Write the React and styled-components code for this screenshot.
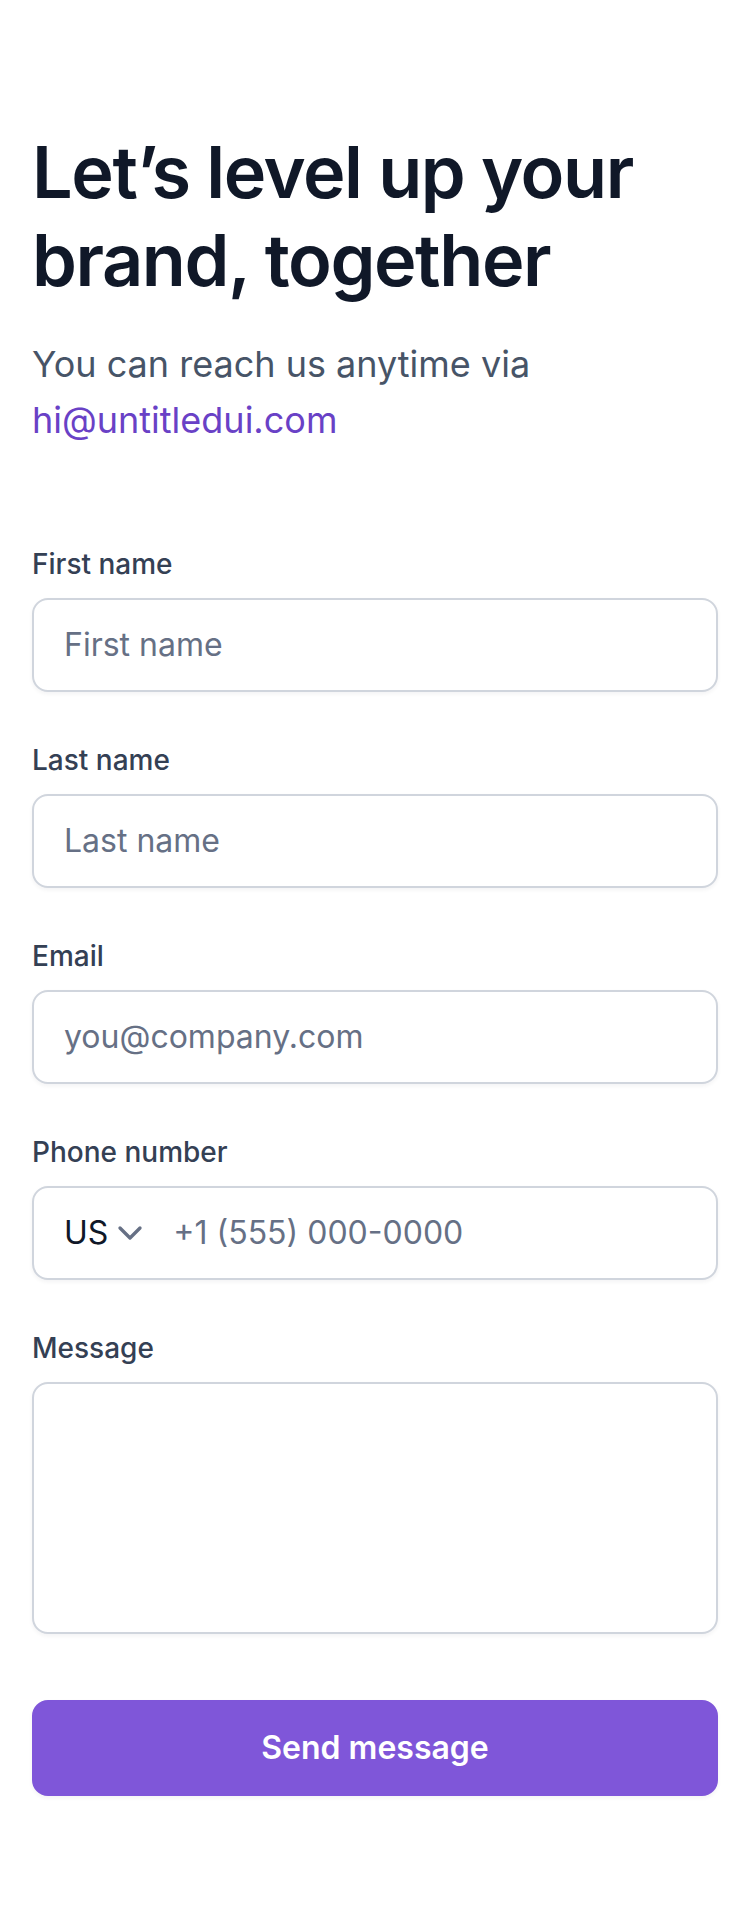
import React from 'react';
import styled, { createGlobalStyle } from 'styled-components';

const GlobalStyle = createGlobalStyle`
  * { box-sizing: border-box; }
  html, body {
    margin: 0;
    padding: 0;
    background: #ffffff;
    font-family: Inter, "Noto Sans", sans-serif;
    -webkit-font-smoothing: antialiased;
  }
`;

const Page = styled.main`
  padding: 128px 32px 128px;
  display: flex;
  flex-direction: column;
`;

const Header = styled.header`
  display: flex;
  flex-direction: column;
  gap: 32px;
  margin-bottom: 96px;
`;

const Title = styled.h1`
  margin: 0;
  font-size: 72px;
  line-height: 88px;
  font-weight: 600;
  letter-spacing: -1.44px;
  color: #101828;
`;

const Lead = styled.p`
  margin: 0;
  font-size: 36px;
  line-height: 56px;
  font-weight: 400;
  color: #475467;
`;

const MailLink = styled.a`
  color: #6941c6;
  text-decoration: none;
`;

const Form = styled.form`
  display: flex;
  flex-direction: column;
  gap: 48px;
`;

const Field = styled.div`
  display: flex;
  flex-direction: column;
  gap: 14px;
`;

const Label = styled.label`
  font-size: 28px;
  line-height: 40px;
  font-weight: 500;
  color: #344054;
`;

const Box = styled.div`
  display: flex;
  align-items: center;
  height: ${(p) => p.$height || 94}px;
  padding: 0 30px;
  border: 2px solid #d0d5dd;
  border-radius: 16px;
  background: #fff;
  box-shadow: 0 2px 4px rgba(16, 24, 40, 0.05);
`;

const TextInput = styled.input`
  flex: 1;
  min-width: 0;
  border: 0;
  outline: none;
  background: transparent;
  padding: 0;
  font-family: inherit;
  font-size: 32px;
  line-height: 48px;
  color: #101828;

  &::placeholder {
    color: #667085;
  }
`;

const TextArea = styled.textarea`
  display: block;
  width: 100%;
  height: 252px;
  padding: 20px 30px;
  border: 2px solid #d0d5dd;
  border-radius: 16px;
  background: #fff;
  box-shadow: 0 2px 4px rgba(16, 24, 40, 0.05);
  font-family: inherit;
  font-size: 32px;
  line-height: 48px;
  color: #101828;
  resize: none;
  outline: none;
`;

const Country = styled.div`
  display: flex;
  align-items: center;
  gap: 2px;
  margin-right: 23px;
  font-size: 32px;
  line-height: 48px;
  color: #101828;
`;

const Chevron = () => (
  <svg width="40" height="40" viewBox="0 0 20 20" fill="none">
    <path
      d="M5 7.5l5 5 5-5"
      stroke="#667085"
      strokeWidth="1.67"
      strokeLinecap="round"
      strokeLinejoin="round"
    />
  </svg>
);

const SubmitButton = styled.button`
  margin-top: 18px;
  height: 96px;
  border: 2px solid #7f56d9;
  border-radius: 16px;
  background: #7f56d9;
  box-shadow: 0 2px 4px rgba(16, 24, 40, 0.05);
  color: #fff;
  font-family: inherit;
  font-size: 32px;
  line-height: 48px;
  font-weight: 600;
  cursor: pointer;
`;

const fields = [
  { id: 'first', label: 'First name', placeholder: 'First name', type: 'text' },
  { id: 'last', label: 'Last name', placeholder: 'Last name', type: 'text' },
  { id: 'email', label: 'Email', placeholder: 'you@company.com', type: 'email' },
];

export default function App() {
  return (
    <>
      <GlobalStyle />
      <Page>
        <Header>
          <Title>Let’s level up your brand, together</Title>
          <Lead>
            You can reach us anytime via{' '}
            <MailLink href="mailto:hi@untitledui.com">hi@untitledui.com</MailLink>
          </Lead>
        </Header>
        <Form onSubmit={(e) => e.preventDefault()}>
          {fields.map((f) => (
            <Field key={f.id}>
              <Label htmlFor={f.id}>{f.label}</Label>
              <Box>
                <TextInput id={f.id} type={f.type} placeholder={f.placeholder} />
              </Box>
            </Field>
          ))}
          <Field>
            <Label htmlFor="phone">Phone number</Label>
            <Box>
              <Country>
                US
                <Chevron />
              </Country>
              <TextInput id="phone" type="tel" placeholder="+1 (555) 000-0000" />
            </Box>
          </Field>
          <Field>
            <Label htmlFor="message">Message</Label>
            <TextArea id="message" />
          </Field>
          <SubmitButton type="submit">Send message</SubmitButton>
        </Form>
      </Page>
    </>
  );
}
